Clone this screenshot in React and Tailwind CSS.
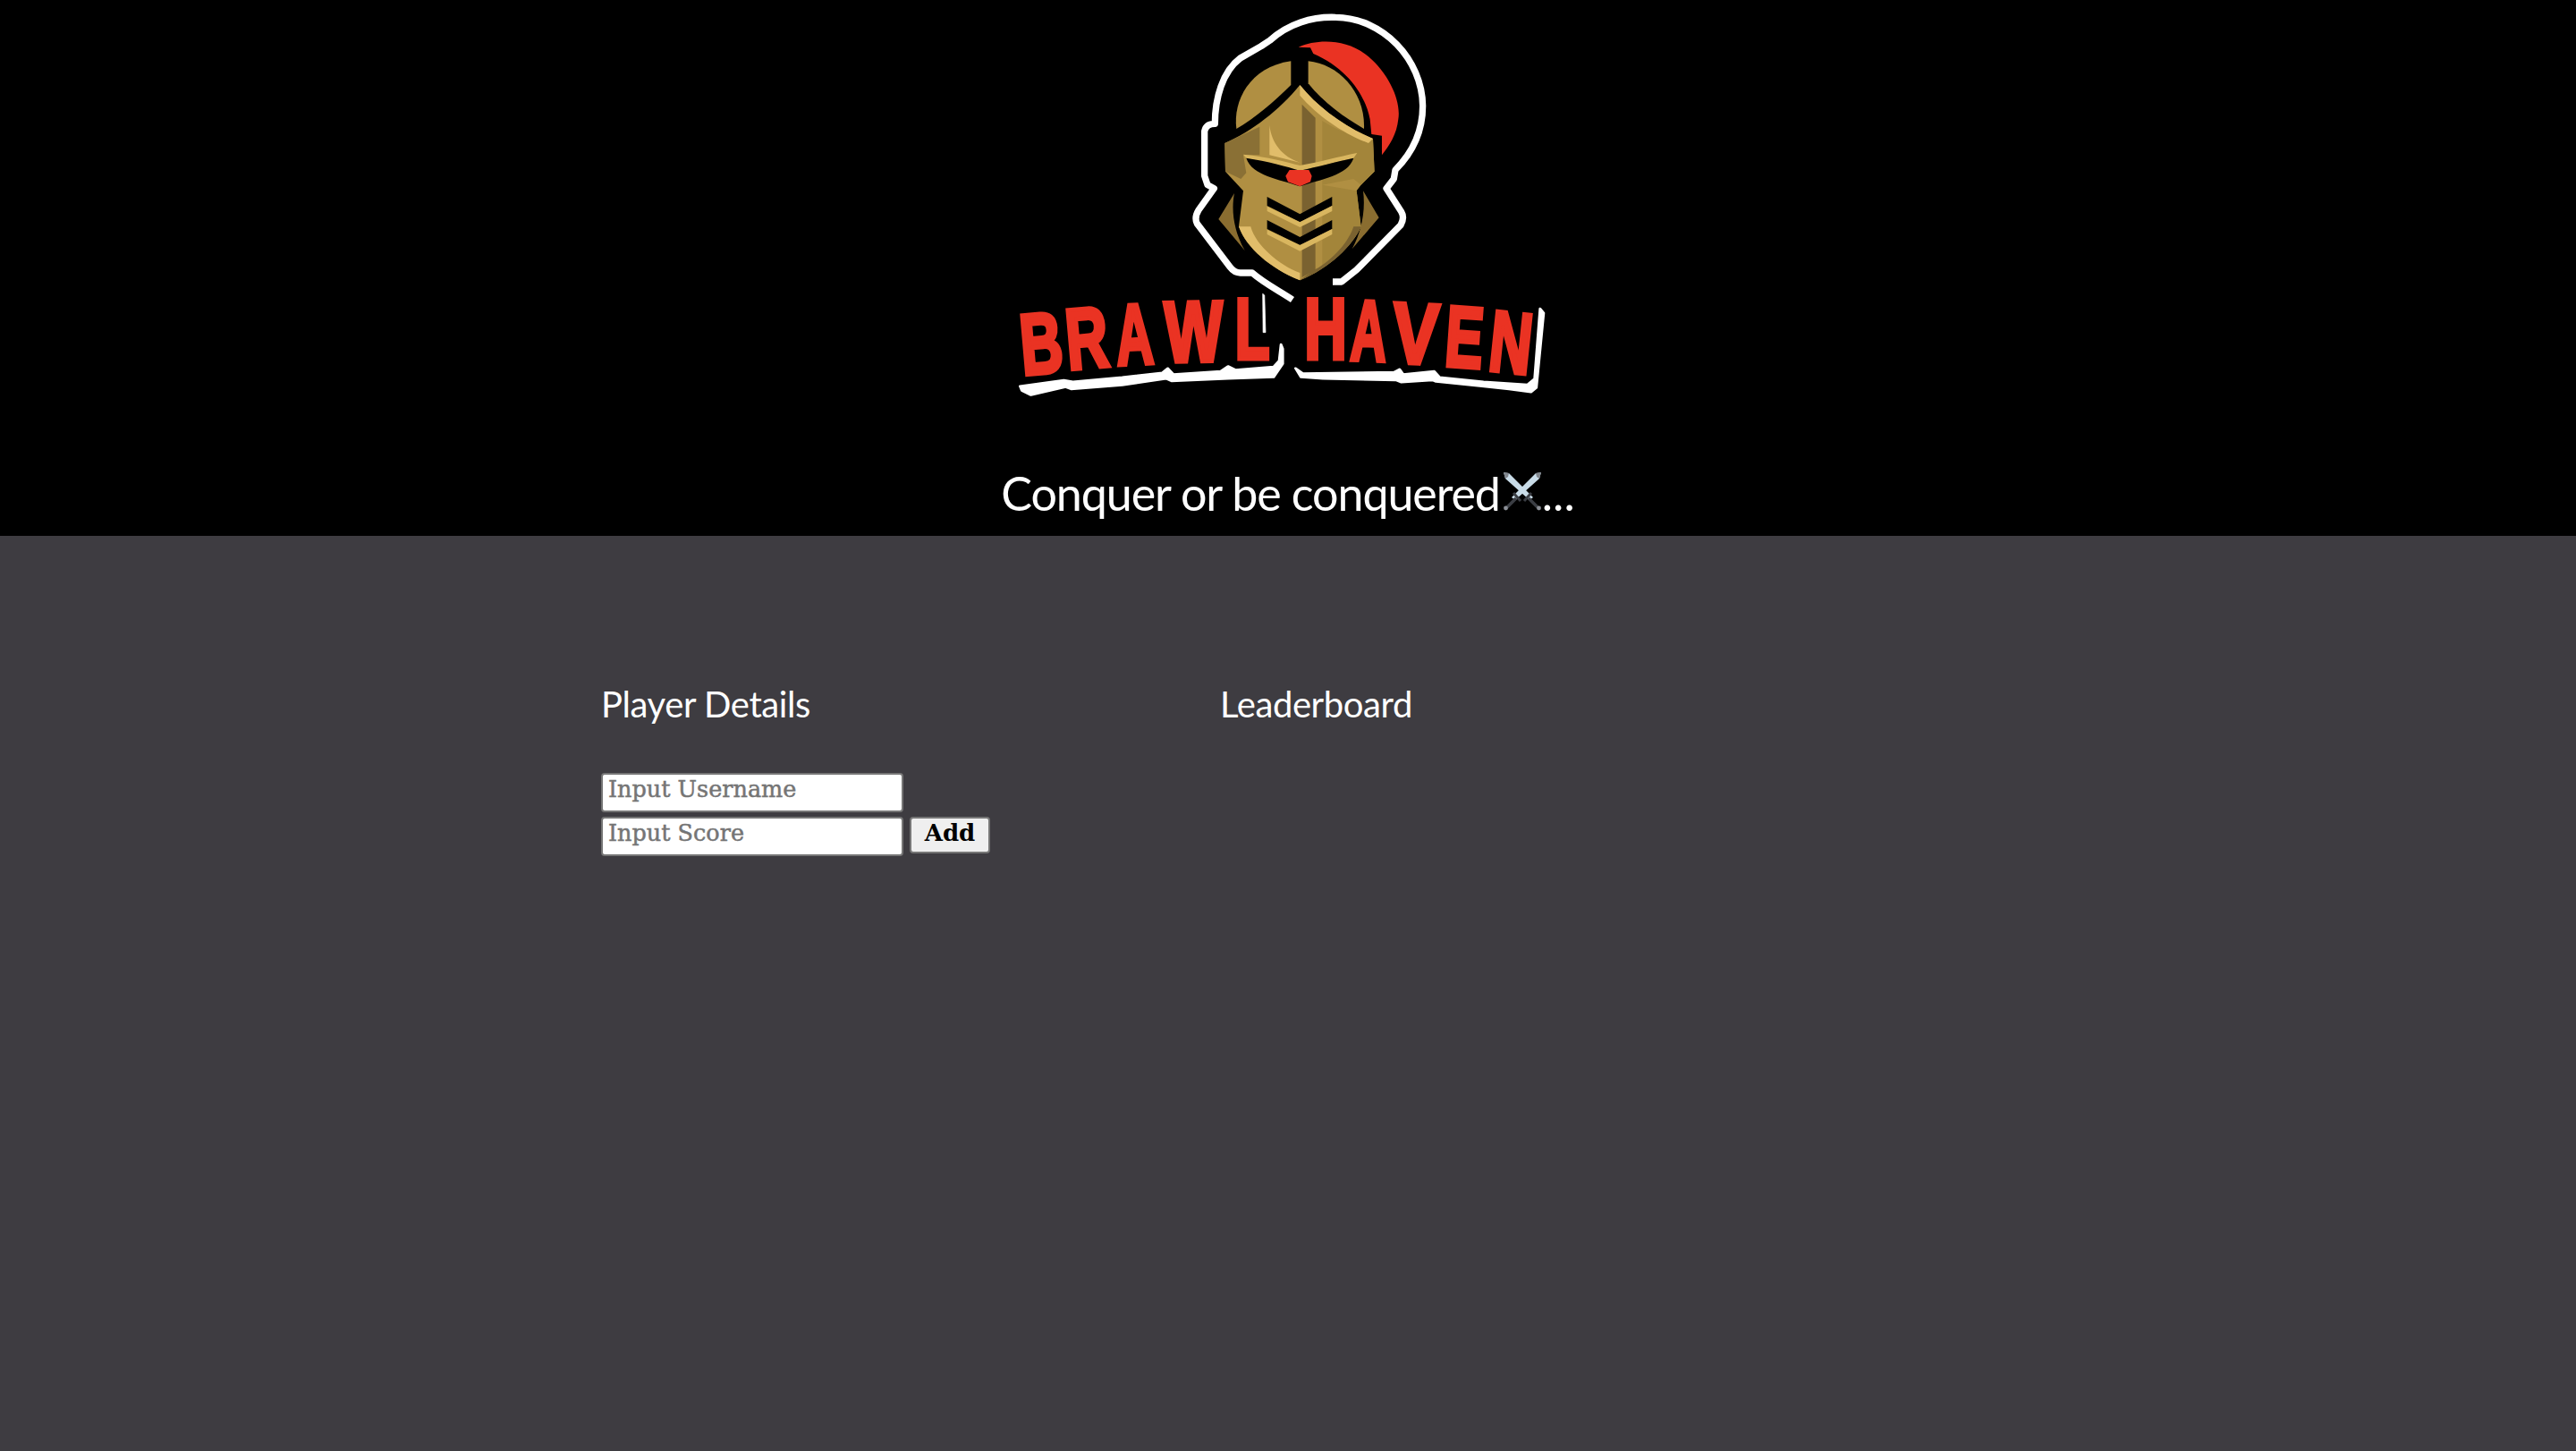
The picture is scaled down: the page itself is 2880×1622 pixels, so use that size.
import React from 'react';

const letters = [
  { ch: 'B', x: 1167, y: 417, r: -5, sx: 0.68 },
  { ch: 'R', x: 1218, y: 411, r: -5, sx: 0.68 },
  { ch: 'A', x: 1270, y: 407, r: -3, sx: 0.6 },
  { ch: 'W', x: 1335, y: 404, r: -1, sx: 0.72 },
  { ch: 'L', x: 1400, y: 401, r: 0, sx: 0.66 },
  { ch: 'H', x: 1482, y: 401, r: 0, sx: 0.68 },
  { ch: 'A', x: 1529, y: 403, r: 2, sx: 0.58 },
  { ch: 'V', x: 1581, y: 406, r: 3, sx: 0.8 },
  { ch: 'E', x: 1635, y: 410, r: 4, sx: 0.66 },
  { ch: 'N', x: 1686, y: 416, r: 6, sx: 0.68 },
];

const Logo = () => (
  <svg className="block mx-auto" width="640" height="460" viewBox="1120 0 640 460">
    {/* helmet, coords taken from a 3x crop */}
    <g transform="translate(1300 0) scale(0.3333)">
      <path
        d="M570,945 L600,945 L650,905 L798,755 Q812,730 800,710 L750,632 L775,600 L780,570 C830,520 872,450 872,355 C870,200 740,60 580,58 C500,55 420,80 360,135 L330,155 L260,195 C200,240 175,330 175,415 Q145,415 140,440 L140,590 L150,620 L172,632 L120,705 Q105,730 115,750 L225,895 Q240,915 260,915 L300,915 C340,950 390,975 435,1005"
        fill="#000"
        stroke="#fff"
        strokeWidth="22"
        strokeLinejoin="round"
      />
      <path d="M455,158 C520,130 620,130 690,190 C760,250 800,340 790,400 C785,450 760,490 735,520 L735,455 L700,450 L695,400 C680,320 620,230 505,180 L495,160 Z" fill="#ea3323" />
      <path d="M430,205 L430,285 C370,345 310,395 247,432 C235,340 290,225 430,205 Z" fill="#b08f42" />
      <path d="M488,205 C590,215 680,310 675,432 C610,395 540,345 488,280 Z" fill="#b08f42" />
      <path d="M187,735 L240,648 C230,700 235,770 275,840 Z" fill="#8a6d30" />
      <path d="M725,730 L672,640 C680,700 670,770 635,835 Z" fill="#8a6d30" />
      <path d="M460,285 C520,360 610,425 705,465 L710,575 L665,620 L650,640 L665,760 C640,820 560,900 460,940 C360,900 280,830 255,760 L270,640 L210,575 L208,480 C300,440 390,370 460,285 Z" fill="#b08f42" />
      <path d="M208,480 L325,425 L325,520 L270,520 L280,580 L262,600 L210,575 Z" fill="#8a7035" />
      <path d="M535,405 C590,440 650,462 705,465 L710,575 L665,620 L640,600 L535,620 Z" fill="#a3853a" />
      <path d="M467,350 L512,395 L512,905 L467,930 Z" fill="#7a6230" />
      <path d="M535,620 L650,640 L665,760 C640,810 590,860 535,890 Z" fill="#a3853a" />
      <path d="M460,285 C520,360 610,425 705,465 L690,480 C610,450 520,390 460,320 Z" fill="#e1bd6a" />
      <path d="M358,420 C365,480 400,525 460,545 L358,520 Z" fill="#e1bd6a" />
      <path d="M270,518 C350,525 420,545 460,555 C520,545 590,525 652,513 L640,530 L460,572 L280,530 Z" fill="#d9b65f" />
      <path d="M280,530 C350,540 420,560 460,572 C520,560 590,540 640,530 C620,590 530,600 460,625 C390,600 300,590 280,530 Z" fill="#000" />
      <path d="M425,570 L490,570 L500,590 L495,610 L460,625 L420,610 L412,590 Z" fill="#ea3323" />
      <path d="M350,660 L460,718 L568,660 L568,690 L460,745 L350,690 Z" fill="#000" />
      <path d="M350,692 L460,745 L568,690 L568,708 L460,762 L350,708 Z" fill="#d9b65f" />
      <path d="M350,738 L460,795 L568,738 L568,768 L460,822 L350,768 Z" fill="#000" />
      <path d="M350,770 L460,822 L568,768 L568,786 L460,842 L350,786 Z" fill="#d9b65f" />
      <path d="M255,760 L295,760 C310,820 390,890 460,915 L460,940 C360,900 280,830 255,760 Z" fill="#e1bd6a" />
      <path d="M665,760 L640,760 C620,820 560,880 500,910 L460,940 C560,900 640,820 665,760 Z" fill="#7a6230" />
    </g>
    {/* white band under the lettering */}
    <g transform="translate(1120 310) scale(0.408 0.3333)" fill="#fff" stroke="#fff" strokeWidth="7" strokeLinejoin="round">
      <path d="M50,365 L170,345 L195,350 L330,335 L440,320 L455,305 L470,325 L600,315 L620,298 L640,310 L745,300 L760,280 L765,225 L770,240 L770,290 L745,335 L620,340 L465,348 L450,340 L330,362 L190,375 L175,368 L80,395 L55,380 Z" />
      <path d="M805,305 L825,322 L1075,318 L1090,308 L1100,325 L1185,315 L1200,335 L1320,350 L1440,360 L1460,340 L1475,105 L1485,120 L1465,370 L1450,385 L1390,375 L1310,365 L1190,350 L1180,345 L1095,352 L1080,345 L880,340 L820,335 Z" />
      <path d="M715,55 L720,60 L723,185 L716,185 Z" strokeWidth="2" />
    </g>
    {letters.map((l, i) => (
      <text
        key={i}
        transform={`translate(${l.x} ${l.y}) rotate(${l.r}) scale(${l.sx} 1)`}
        textAnchor="middle"
        fontFamily="'Liberation Sans', sans-serif"
        fontWeight="700"
        fontSize="96"
        fill="#ea3323"
        stroke="#ea3323"
        strokeWidth="5"
      >
        {l.ch}
      </text>
    ))}
  </svg>
);

const Swords = () => (
  <svg className="block shrink-0 ml-[3px] mt-[-4px]" width="44" height="44" viewBox="0 0 44 44">
    <path d="M43,1 L41,8 L14,32 L10,29 L37,2 Z" fill="#c9dce8" />
    <path d="M1,1 L3,8 L30,32 L34,29 L7,2 Z" fill="#c9dce8" />
    <path d="M37,2 L43,1 L41,8 L38,6 Z" fill="#80858c" />
    <path d="M7,2 L1,1 L3,8 L6,6 Z" fill="#80858c" />
    <path d="M12,24 L20,33 M32,24 L24,33" stroke="#3b3e44" strokeWidth="3" />
    <path d="M15,30 L4,41 M29,30 L40,41" stroke="#3b3e44" strokeWidth="3.5" />
    <circle cx="3.5" cy="41" r="2.4" fill="#8b8f96" />
    <circle cx="40.5" cy="41" r="2.4" fill="#8b8f96" />
  </svg>
);

const fieldClass =
  "block w-[338px] h-[44px] rounded-[4px] border-2 border-[#767676] bg-white pl-[6px] pb-[8px] text-[25.5px] leading-none font-['DejaVu_Serif',serif] [-webkit-text-stroke:0.5px_#757575] placeholder:text-[#757575] outline-none";

const App = () => {
  return (
    <div className="min-h-[1622px] bg-[#3e3c41] text-white font-['Lato',sans-serif]">
      <header className="h-[599px] bg-black">
        <Logo />
        <div className="flex items-center justify-center pt-[61px]">
          <span className="text-[52px] leading-[60px] tracking-[-1.1px] font-normal">Conquer or be conquered</span>
          <Swords />
          <span className="text-[52px] leading-[60px] font-normal">...</span>
        </div>
      </header>

      <main className="mx-auto w-[1536px] pt-[165px] grid grid-cols-[692px_1fr]">
        <section>
          <h2 className="text-[40px] leading-[46px] font-normal tracking-[-0.4px]">Player Details</h2>
          <form className="mt-[54px] flex flex-col gap-[5px]">
            <input className={fieldClass} placeholder="Input Username" />
            <div className="flex items-start gap-[7px]">
              <input className={fieldClass} placeholder="Input Score" />
              <button
                type="button"
                className="w-[90px] h-[41px] rounded-[4px] border-2 border-[#767676] bg-[#efefef] text-black text-[26px] leading-none pb-[6px] font-['DejaVu_Serif',serif] font-semibold"
              >
                Add
              </button>
            </div>
          </form>
        </section>
        <section>
          <h2 className="text-[40px] leading-[46px] font-normal tracking-[-0.4px]">Leaderboard</h2>
        </section>
      </main>
    </div>
  );
};

export default App;
